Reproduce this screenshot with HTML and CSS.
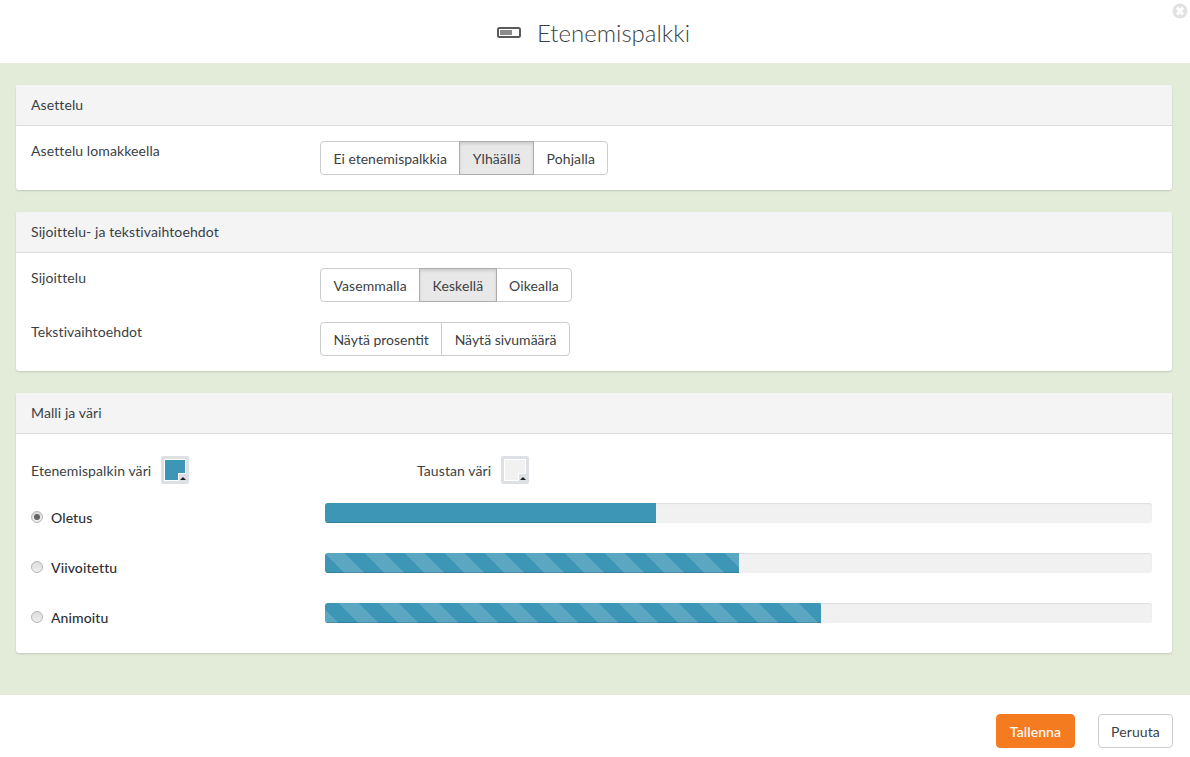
FILE: index.html
```html
<!DOCTYPE html>
<html lang="fi">
<head>
    <meta charset="UTF-8">
    <title>Etenemispalkki</title>
    <link rel="stylesheet" href="styles.css">
</head>
<body>
    <header class="modal-header">
        <svg class="title-icon" width="24" height="11" viewBox="0 0 24 11">
            <rect x="1" y="1" width="22" height="9" rx="1.5" fill="#fff" stroke="#5a5a5a" stroke-width="2"/>
            <rect x="3" y="3" width="12" height="5" fill="#8c8c8c"/>
        </svg>
        <h1>Etenemispalkki</h1>
        <span class="close">
            <svg width="16" height="16" viewBox="0 0 16 16">
                <circle cx="8" cy="8" r="7.5" fill="#e2e2e2"/>
                <path d="M5 4.5l6 7M11 4.5l-6 7" stroke="#fff" stroke-width="2.8"/>
            </svg>
        </span>
    </header>

    <main class="modal-body">
        <section class="card">
            <h2 class="card-title">Asettelu</h2>
            <div class="card-body">
                <div class="row">
                    <div class="row-label">Asettelu lomakkeella</div>
                    <div class="btn-group">
                        <button class="tight">Ei etenemispalkkia</button>
                        <button class="active">Ylhäällä</button>
                        <button>Pohjalla</button>
                    </div>
                </div>
            </div>
        </section>

        <section class="card">
            <h2 class="card-title">Sijoittelu- ja tekstivaihtoehdot</h2>
            <div class="card-body">
                <div class="row">
                    <div class="row-label">Sijoittelu</div>
                    <div class="btn-group">
                        <button>Vasemmalla</button>
                        <button class="active">Keskellä</button>
                        <button>Oikealla</button>
                    </div>
                </div>
                <div class="row">
                    <div class="row-label">Tekstivaihtoehdot</div>
                    <div class="btn-group">
                        <button class="tight">Näytä prosentit</button>
                        <button class="tight">Näytä sivumäärä</button>
                    </div>
                </div>
            </div>
        </section>

        <section class="card">
            <h2 class="card-title">Malli ja väri</h2>
            <div class="card-body style-body">
                <div class="colors">
                    <div class="color-item color-bar">
                        <span>Etenemispalkin väri</span>
                        <span class="swatch swatch-blue"><i class="swatch-corner"></i></span>
                    </div>
                    <div class="color-item">
                        <span>Taustan väri</span>
                        <span class="swatch swatch-grey"><i class="swatch-corner"></i></span>
                    </div>
                </div>
                <div class="style-row">
                    <label class="radio"><span class="dot checked"></span>Oletus</label>
                    <div class="progress"><div class="fill fill-40"></div></div>
                </div>
                <div class="style-row">
                    <label class="radio"><span class="dot"></span>Viivoitettu</label>
                    <div class="progress"><div class="fill striped fill-50"></div></div>
                </div>
                <div class="style-row">
                    <label class="radio"><span class="dot"></span>Animoitu</label>
                    <div class="progress"><div class="fill striped animated fill-60"></div></div>
                </div>
            </div>
        </section>
    </main>

    <footer class="modal-footer">
        <button class="btn-save">Tallenna</button>
        <button class="btn-cancel">Peruuta</button>
    </footer>
</body>
</html>
```

FILE: styles.css
```css
* {
    box-sizing: border-box;
    margin: 0;
    padding: 0;
}

body {
    height: 757px;
    overflow: hidden;
    background: #fff;
    color: #3a3f45;
    font-family: Lato, "Open Sans", sans-serif;
    font-size: 14px;
    letter-spacing: 0.1px;
    display: flex;
    flex-direction: column;
}

button {
    letter-spacing: inherit;
}

.modal-header {
    height: 63px;
    display: flex;
    align-items: center;
    justify-content: center;
    gap: 16px;
    position: relative;
    padding: 1px 3px 0 0;
}

.modal-header h1 {
    font-size: 24px;
    font-weight: 300;
    letter-spacing: 0;
    color: #3a3f45;
}

.title-icon {
    margin-top: 1px;
}

.close {
    position: absolute;
    top: 3px;
    right: 2px;
    width: 16px;
    height: 16px;
}

.modal-body {
    height: 632px;
    background: #e2ecd9;
    padding: 22px 18px 0 16px;
    display: flex;
    flex-direction: column;
    gap: 22px;
}

.card {
    background: #fff;
    border-radius: 3px;
    box-shadow: 0 1px 2px rgba(0, 0, 0, 0.15);
}

.card-title {
    height: 41px;
    padding: 0 15px;
    background: #f4f4f4;
    border-bottom: 1px solid #dcdcdc;
    border-radius: 3px 3px 0 0;
    font-size: 14px;
    font-weight: 400;
    line-height: 40px;
}

.card-body {
    padding: 15px;
    display: flex;
    flex-direction: column;
    gap: 20px;
}

.row {
    display: flex;
}

.row-label {
    width: 289px;
    line-height: 20px;
}

.btn-group {
    display: flex;
}

.btn-group button {
    height: 34px;
    padding: 0 12.4px;
    background: #fff;
    border: 1px solid #ccc;
    margin-left: -1px;
    color: #3a3f45;
    font-family: inherit;
    font-size: 14px;
}

.btn-group button.tight {
    letter-spacing: 0;
}

.btn-group button:first-child {
    margin-left: 0;
    border-radius: 4px 0 0 4px;
}

.btn-group button:last-child {
    border-radius: 0 4px 4px 0;
}

.btn-group button.active {
    background: #e8e8e8;
    border-color: #adadad;
    box-shadow: inset 0 2px 3px rgba(0, 0, 0, 0.12);
    position: relative;
}

.style-body {
    padding: 22px 20px 30px 15px;
    gap: 0;
}

.colors {
    display: flex;
    align-items: center;
    height: 28px;
    margin-bottom: 19px;
}

.color-item {
    display: flex;
    align-items: center;
    gap: 10px;
}

.color-bar {
    width: 386px;
}

.swatch {
    display: block;
    width: 28px;
    height: 28px;
    border: 3px solid #dde0e4;
    border-radius: 2px;
    position: relative;
}

.swatch-blue {
    background: #3e96b6;
}

.swatch-grey {
    background: #f1f1f1;
}

.swatch::before {
    content: "";
    position: absolute;
    inset: 0;
    border: 1px solid #fff;
}

.swatch-corner {
    position: absolute;
    right: 0;
    bottom: 0;
    width: 8px;
    height: 8px;
    background: #dde0e4;
    border-top: 1px solid #fff;
    border-left: 1px solid #fff;
}

.swatch-corner::after {
    content: "";
    position: absolute;
    right: 0;
    bottom: 1px;
    border-left: 3px solid transparent;
    border-right: 3px solid transparent;
    border-bottom: 3px solid #1f2327;
}

.style-row {
    display: flex;
    align-items: center;
    height: 20px;
    margin-bottom: 30px;
}

.style-row:last-child {
    margin-bottom: 0;
}

.radio {
    width: 294px;
    display: flex;
    align-items: center;
    gap: 8px;
    font-weight: 500;
    color: #2c3035;
    padding-top: 8px;
}

.dot {
    width: 12px;
    height: 12px;
    border-radius: 50%;
    border: 1px solid #b5b5b5;
    background: linear-gradient(#dcdcdc, #efefef);
    position: relative;
}

.dot.checked::after {
    content: "";
    position: absolute;
    top: 2px;
    left: 2px;
    width: 6px;
    height: 6px;
    border-radius: 50%;
    background: #666;
}

.progress {
    flex: 1;
    height: 20px;
    background: #f1f1f1;
    border-radius: 3px;
    overflow: hidden;
    box-shadow: inset 0 1px 1px rgba(0, 0, 0, 0.08);
}

.fill {
    height: 100%;
    background-color: #3e96b6;
    box-shadow: inset 0 -1px 0 rgba(0, 0, 0, 0.15);
}

.fill-40 {
    width: 40%;
}

.fill-50 {
    width: 50%;
}

.fill-60 {
    width: 60%;
}

.striped {
    background-image: linear-gradient(45deg, rgba(255, 255, 255, 0.15) 25%, transparent 25%, transparent 50%, rgba(255, 255, 255, 0.15) 50%, rgba(255, 255, 255, 0.15) 75%, transparent 75%, transparent);
    background-size: 40px 40px;
}

.animated {
    background-position: 14px 0;
}

.modal-footer {
    flex: 1;
    display: flex;
    justify-content: flex-end;
    align-items: flex-start;
    gap: 23px;
    padding: 19px 17px 0 0;
}

.modal-footer button {
    height: 34px;
    border-radius: 4px;
    font-family: inherit;
    font-size: 14px;
}

.btn-save {
    width: 79px;
    background: #f47b20;
    border: 1px solid #f47b20;
    color: #fff;
    font-weight: 500;
}

.btn-cancel {
    width: 75px;
    background: #fff;
    border: 1px solid #ccc;
    color: #3a3f45;
}
```
